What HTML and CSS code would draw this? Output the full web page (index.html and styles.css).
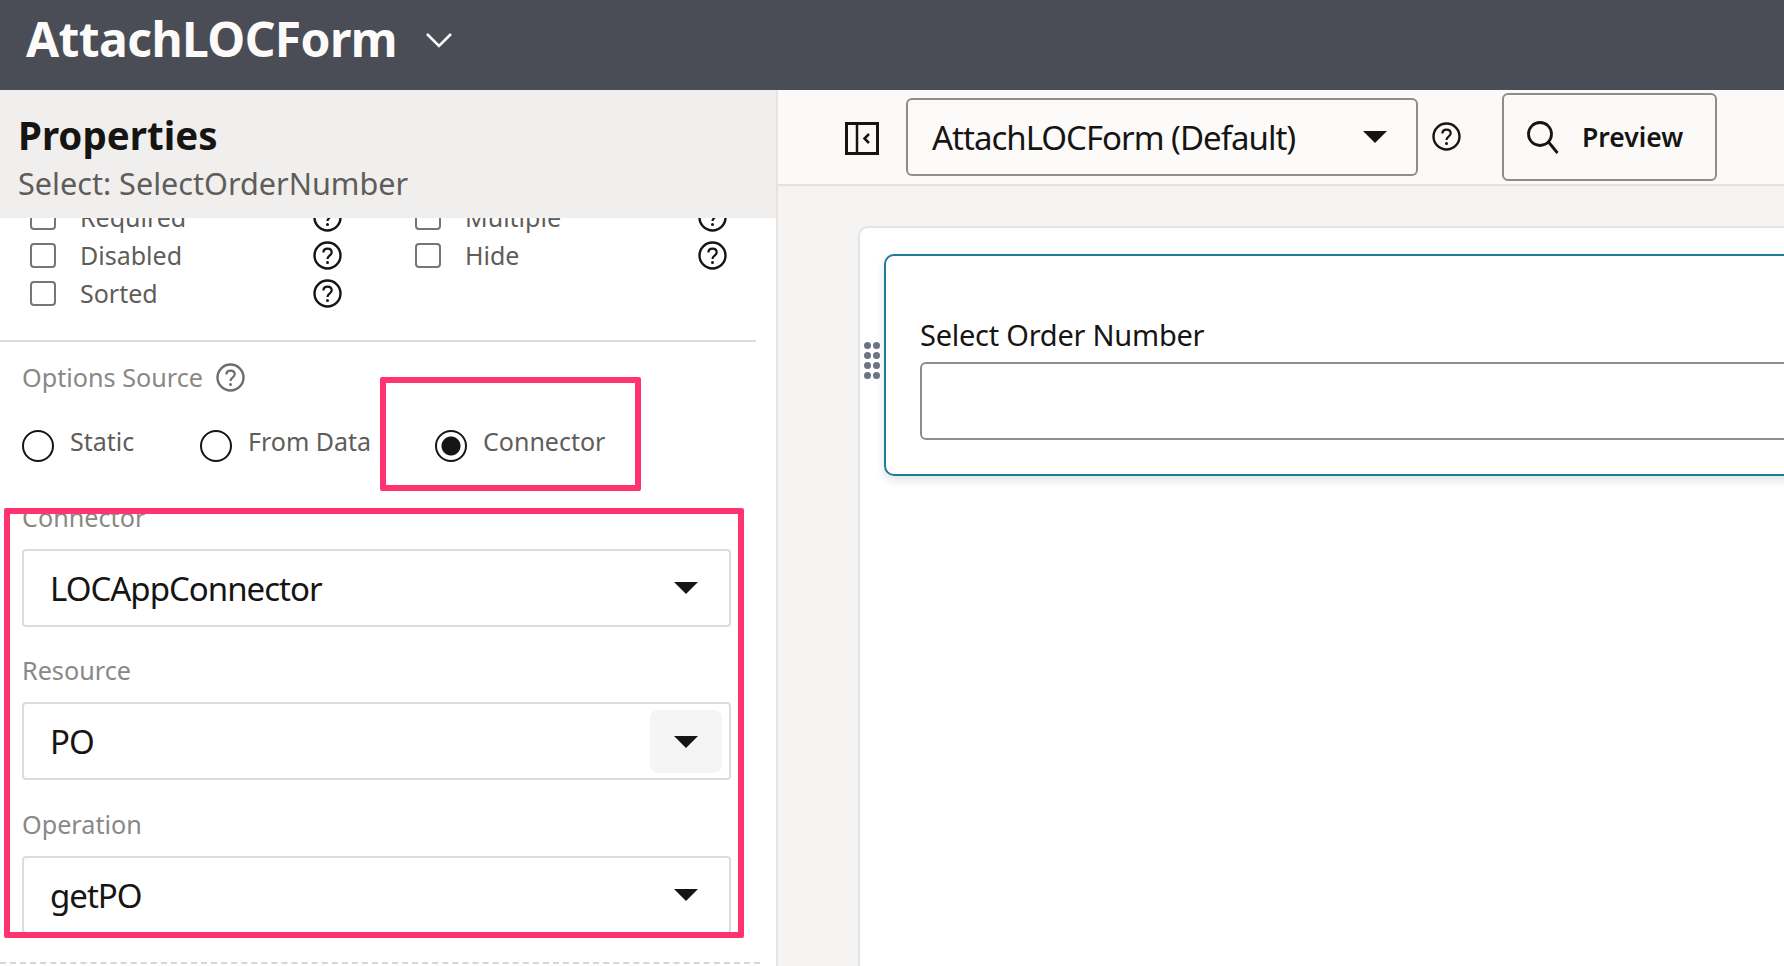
FILE: index.html
```html
<!DOCTYPE html>
<html lang="en">
<head>
  <meta charset="UTF-8">
  <title>AttachLOCForm</title>
  <link rel="stylesheet" href="styles.css">
</head>
<body>
  <svg width="0" height="0" class="defs">
    <symbol id="help" viewBox="0 0 29 29">
      <circle cx="14.5" cy="14.5" r="13" fill="none" stroke="currentColor" stroke-width="2.4"/>
      <path d="M10.4 11.6c0-2.5 1.8-4 4.2-4s4.1 1.5 4.1 3.7c0 3.4-4.2 3.3-4.2 6.6" fill="none" stroke="currentColor" stroke-width="2.2"/>
      <circle cx="14.5" cy="21.4" r="1.5" fill="currentColor"/>
    </symbol>
    <symbol id="caret" viewBox="0 0 24 12">
      <path d="M0 0h24L12 12z" fill="currentColor"/>
    </symbol>
  </svg>

  <header class="topbar">
    <h1 class="app-title">AttachLOCForm</h1>
    <svg class="chevron" width="28" height="16" viewBox="0 0 28 16"><path d="M2 2l12 12L26 2" fill="none" stroke="#fcfbfa" stroke-width="2.6"/></svg>
  </header>

  <div class="main">
    <aside class="props">
      <div class="props-head">
        <h2>Properties</h2>
        <p>Select: SelectOrderNumber</p>
      </div>
      <div class="props-scroll">
        <div class="check-grid">
          <div class="check"><span class="box"></span><span class="check-label">Required</span><svg class="help"><use href="#help"/></svg></div>
          <div class="check"><span class="box"></span><span class="check-label">Multiple</span><svg class="help"><use href="#help"/></svg></div>
          <div class="check"><span class="box"></span><span class="check-label">Disabled</span><svg class="help"><use href="#help"/></svg></div>
          <div class="check"><span class="box"></span><span class="check-label">Hide</span><svg class="help"><use href="#help"/></svg></div>
          <div class="check"><span class="box"></span><span class="check-label">Sorted</span><svg class="help"><use href="#help"/></svg></div>
        </div>
        <hr class="rule">
        <div class="field-label source-label">Options Source <svg class="help"><use href="#help"/></svg></div>
        <div class="radios">
          <div class="radio r-static"><span class="dot"></span>Static</div>
          <div class="radio r-data"><span class="dot"></span>From Data</div>
          <div class="radio r-conn"><span class="dot on"></span>Connector</div>
        </div>
        <div class="field-label conn-label">Connector</div>
        <div class="select"><span>LOCAppConnector</span><svg class="caret"><use href="#caret"/></svg></div>
        <div class="field-label">Resource</div>
        <div class="select select-mid"><span>PO</span><span class="caret-hover"><svg class="caret"><use href="#caret"/></svg></span></div>
        <div class="field-label">Operation</div>
        <div class="select"><span>getPO</span><svg class="caret"><use href="#caret"/></svg></div>
        <div class="dashed"></div>
      </div>
      <div class="mark mark-radio"></div>
      <div class="mark mark-fields"></div>
    </aside>

    <section class="editor">
      <div class="toolbar">
        <svg class="panel-icon" width="34" height="33" viewBox="0 0 34 33">
          <rect x="1.5" y="1.5" width="31" height="30" fill="none" stroke="#161513" stroke-width="3"/>
          <path d="M12 2v29" stroke="#161513" stroke-width="2.5"/>
          <path d="M24 12l-4.5 4.5L24 21" fill="none" stroke="#161513" stroke-width="2.5"/>
        </svg>
        <div class="layout-select"><span>AttachLOCForm (Default)</span><svg class="caret"><use href="#caret"/></svg></div>
        <svg class="help tool-help"><use href="#help"/></svg>
        <button class="preview">
          <svg width="34" height="33" viewBox="0 0 34 33"><circle cx="14" cy="13" r="11.5" fill="none" stroke="#161513" stroke-width="2.8"/><path d="M22.5 21l9 11" stroke="#161513" stroke-width="2.8"/></svg>
          Preview
        </button>
      </div>
      <div class="canvas">
        <div class="card">
          <div class="grip"><i></i><i></i><i></i><i></i><i></i><i></i><i></i><i></i></div>
          <div class="form-box">
            <label class="form-label">Select Order Number</label>
            <div class="form-input"></div>
          </div>
        </div>
      </div>
    </section>
  </div>
</body>
</html>
```

FILE: styles.css
```css
* {
  box-sizing: border-box;
}

html, body {
  height: 100%;
}

body {
  margin: 0;
  overflow: hidden;
  font-family: "Noto Sans", sans-serif;
  color: #161513;
  background: #fff;
  display: flex;
  flex-direction: column;
}

.defs {
  position: absolute;
}

.topbar {
  height: 90px;
  flex: none;
  background: #4a4d55;
  display: flex;
  align-items: center;
  padding: 0 0 13px 26px;
}

.app-title {
  margin: 0;
  font-size: 48px;
  font-weight: 700;
  color: #fcfbfa;
  letter-spacing: -0.6px;
}

.chevron {
  margin: 2px 0 0 28px;
}

.main {
  flex: 1;
  display: flex;
  min-height: 0;
}

/* left panel */
.props {
  position: relative;
  width: 778px;
  flex: none;
  border-right: 2px solid #e6e4e1;
  display: flex;
  flex-direction: column;
  overflow: hidden;
}

.props-head {
  height: 128px;
  flex: none;
  background: #f0efed;
  padding: 22px 18px 0;
}

.props-head h2 {
  margin: 0;
  font-size: 38.5px;
  line-height: 46px;
  font-weight: 700;
}

.props-head p {
  margin: 3px 0 0;
  font-size: 30.6px;
  line-height: 44px;
  color: #5f5d5a;
}

.props-scroll {
  flex: 1;
  overflow: hidden;
  min-height: 0;
}

.check-grid {
  margin-top: -20px;
  display: grid;
  grid-template-columns: 385px 320px;
  grid-auto-rows: 38px;
  padding-left: 30px;
}

.check {
  display: flex;
  align-items: center;
  font-size: 25px;
  color: #5f5d5a;
}

.box {
  width: 26px;
  height: 25px;
  border: 2px solid #787674;
  border-radius: 4px;
  background: #fff;
}

.check-label {
  margin-left: 24px;
  flex: 1;
}

.help {
  width: 29px;
  height: 29px;
  color: #161513;
  flex: none;
}

.check .help {
  margin-right: 73px;
}

.check:nth-child(even) .help {
  margin-right: 8px;
}

.rule {
  width: 756px;
  margin: 28px 0 0;
  border: 0;
  border-top: 2px solid #dedcd8;
}

.field-label {
  font-size: 25.2px;
  line-height: 36px;
  color: #8a8886;
  padding-left: 22px;
}

.source-label {
  margin-top: 17px;
  display: flex;
  align-items: center;
  gap: 13px;
}

.source-label .help {
  color: #6f6d6a;
}

.radios {
  display: flex;
  margin-top: 31px;
  height: 36px;
}

.radio {
  display: flex;
  align-items: center;
  gap: 16px;
  padding-bottom: 6px;
  font-size: 25px;
  color: #5f5d5a;
}

.r-static {
  margin-left: 22px;
  width: 178px;
}

.r-data {
  width: 235px;
}

.dot {
  width: 32px;
  height: 32px;
  border: 2.5px solid #161513;
  border-radius: 50%;
  background: #fff;
  margin-top: 10px;
}

.dot.on {
  background: radial-gradient(circle, #161513 0 9px, #fff 10px);
}

.conn-label {
  margin-top: 37px;
}

.select {
  width: 709px;
  height: 78px;
  margin: 14px 0 25px 22px;
  border: 2px solid #dedcd6;
  border-radius: 4px;
  display: flex;
  align-items: center;
  justify-content: space-between;
  padding: 0 31px 0 26px;
  font-size: 33px;
  letter-spacing: -1px;
  position: relative;
}

.select span:first-child {
  margin-top: 1px;
}

.select-mid {
  margin-bottom: 26px;
}

.caret {
  width: 24px;
  height: 12px;
  flex: none;
  color: #161513;
}

.caret-hover {
  position: absolute;
  right: 7px;
  top: 6px;
  width: 72px;
  height: 63px;
  background: #f5f5f5;
  border-radius: 8px;
  display: flex;
  align-items: center;
  justify-content: center;
}

.dashed {
  width: 760px;
  margin-top: 28px;
  border-top: 2px dashed #d8d6d2;
}

/* annotation boxes */
.mark {
  position: absolute;
  border: 6px solid #ff3370;
  border-radius: 2px;
}

.mark-radio {
  left: 380px;
  top: 287px;
  width: 261px;
  height: 114px;
}

.mark-fields {
  left: 4px;
  top: 418px;
  width: 740px;
  height: 430px;
}

/* right side */
.editor {
  flex: 1;
  min-width: 0;
  display: flex;
  flex-direction: column;
}

.toolbar {
  height: 96px;
  flex: none;
  background: #fbfaf8;
  border-bottom: 2px solid #e4e2de;
  display: flex;
  align-items: center;
  padding-left: 67px;
}

.panel-icon {
  margin-top: 2px;
}

.layout-select {
  width: 512px;
  height: 78px;
  margin: 0 0 0 27px;
  border: 2px solid #8f8d8a;
  border-radius: 6px;
  display: flex;
  align-items: center;
  justify-content: space-between;
  padding: 0 29px 0 24px;
  font-size: 33px;
  letter-spacing: -1px;
  background: #fcfbfa;
}

.tool-help {
  margin: 0 0 2px 14px;
}

.preview {
  width: 215px;
  height: 88px;
  margin: 0 0 0 41px;
  padding: 0 0 0 22px;
  background: #fbfaf8;
  border: 2px solid #8f8d8a;
  border-radius: 6px;
  display: flex;
  align-items: center;
  gap: 22px;
  font-family: "Noto Sans", sans-serif;
  font-size: 26.5px;
  font-weight: 600;
  color: #161513;
}

.canvas {
  flex: 1;
  min-height: 0;
  background: #f5f4f2;
  padding: 40px 0 0 80px;
  overflow: hidden;
}

.card {
  position: relative;
  height: 100%;
  margin-right: -40px;
  background: #fff;
  border: 2px solid #e1e4e8;
  border-right: 0;
  border-bottom: 0;
  border-radius: 10px 0 0 0;
  padding: 26px 0 0 24px;
}

.grip {
  position: absolute;
  left: 4px;
  top: 114px;
  width: 16px;
  display: grid;
  grid-template-columns: 7px 7px;
  gap: 3px 2px;
}

.grip i {
  width: 7px;
  height: 7px;
  border-radius: 50%;
  background: #6b7480;
}

.form-box {
  height: 222px;
  border: 2px solid #23799a;
  border-radius: 10px;
  padding: 59px 0 0 34px;
  box-shadow: 0 4px 10px rgba(0, 0, 0, 0.12);
}

.form-label {
  display: block;
  font-size: 29px;
  line-height: 40px;
  letter-spacing: -0.25px;
}

.form-input {
  height: 78px;
  margin-top: 7px;
  border: 2px solid #8f8d8a;
  border-radius: 6px;
}
```
